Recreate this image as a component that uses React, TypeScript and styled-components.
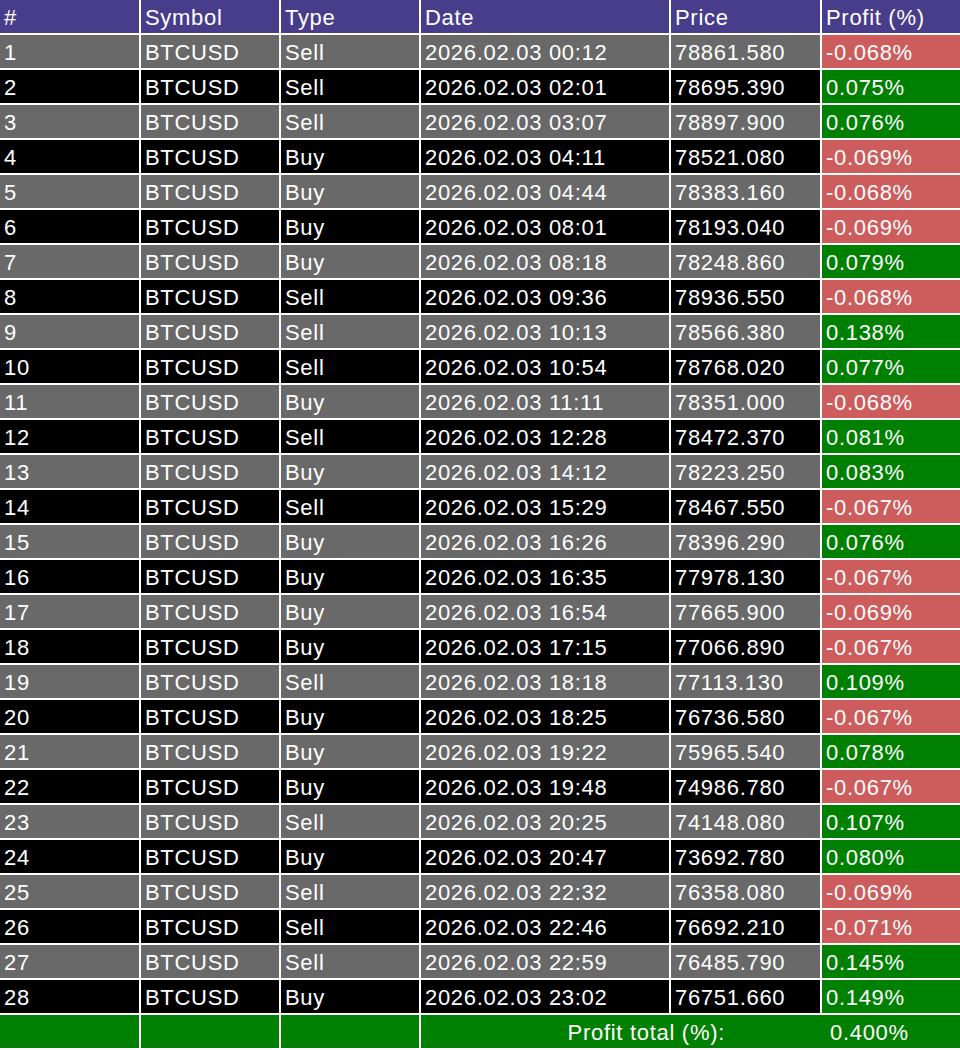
import React from "react";
import styled, { createGlobalStyle } from "styled-components";

const GlobalStyle = createGlobalStyle`
  html, body {
    margin: 0;
    padding: 0;
    background: #ffffff;
  }
  body {
    font-family: "Liberation Sans", Arial, sans-serif;
  }
`;

type Trade = {
  type: "Buy" | "Sell";
  time: string;
  price: string;
  profit: string;
};

const trades: Trade[] = [
  { type: "Sell", time: "00:12", price: "78861.580", profit: "-0.068" },
  { type: "Sell", time: "02:01", price: "78695.390", profit: "0.075" },
  { type: "Sell", time: "03:07", price: "78897.900", profit: "0.076" },
  { type: "Buy", time: "04:11", price: "78521.080", profit: "-0.069" },
  { type: "Buy", time: "04:44", price: "78383.160", profit: "-0.068" },
  { type: "Buy", time: "08:01", price: "78193.040", profit: "-0.069" },
  { type: "Buy", time: "08:18", price: "78248.860", profit: "0.079" },
  { type: "Sell", time: "09:36", price: "78936.550", profit: "-0.068" },
  { type: "Sell", time: "10:13", price: "78566.380", profit: "0.138" },
  { type: "Sell", time: "10:54", price: "78768.020", profit: "0.077" },
  { type: "Buy", time: "11:11", price: "78351.000", profit: "-0.068" },
  { type: "Sell", time: "12:28", price: "78472.370", profit: "0.081" },
  { type: "Buy", time: "14:12", price: "78223.250", profit: "0.083" },
  { type: "Sell", time: "15:29", price: "78467.550", profit: "-0.067" },
  { type: "Buy", time: "16:26", price: "78396.290", profit: "0.076" },
  { type: "Buy", time: "16:35", price: "77978.130", profit: "-0.067" },
  { type: "Buy", time: "16:54", price: "77665.900", profit: "-0.069" },
  { type: "Buy", time: "17:15", price: "77066.890", profit: "-0.067" },
  { type: "Sell", time: "18:18", price: "77113.130", profit: "0.109" },
  { type: "Buy", time: "18:25", price: "76736.580", profit: "-0.067" },
  { type: "Buy", time: "19:22", price: "75965.540", profit: "0.078" },
  { type: "Buy", time: "19:48", price: "74986.780", profit: "-0.067" },
  { type: "Sell", time: "20:25", price: "74148.080", profit: "0.107" },
  { type: "Buy", time: "20:47", price: "73692.780", profit: "0.080" },
  { type: "Sell", time: "22:32", price: "76358.080", profit: "-0.069" },
  { type: "Sell", time: "22:46", price: "76692.210", profit: "-0.071" },
  { type: "Sell", time: "22:59", price: "76485.790", profit: "0.145" },
  { type: "Buy", time: "23:02", price: "76751.660", profit: "0.149" },
];

const colors = {
  header: "#483d8b",
  odd: "#696969",
  even: "#000000",
  loss: "#cd5c5c",
  gain: "#008000",
};

type Tone = keyof typeof colors;

const Table = styled.div`
  display: grid;
  grid-template-columns: 139px 138px 138px 248px 149px 138px;
  grid-auto-rows: 33px;
  gap: 2px;
  width: 960px;
  background: #ffffff;
`;

const Cell = styled.div<{ $tone: Tone }>`
  display: flex;
  align-items: center;
  padding: 3px 4px 0;
  background: ${(p) => colors[p.$tone]};
  color: #ffffff;
  font-size: 22px;
  letter-spacing: 0.7px;
  line-height: 1;
  white-space: nowrap;
  overflow: hidden;
`;

const TotalCell = styled.div`
  grid-column: span 3;
  display: grid;
  grid-template-columns: 1fr 138px;
  align-items: center;
  padding-top: 3px;
  background: ${colors.gain};
  color: #ffffff;
  font-size: 22px;
  letter-spacing: 0.7px;
  line-height: 1;
  white-space: nowrap;
`;

const TotalLabel = styled.span`
  text-align: right;
  padding-right: 97px;
`;

const TotalValue = styled.span`
  padding-left: 8px;
`;

const headers = ["#", "Symbol", "Type", "Date", "Price", "Profit (%)"];

export default function App() {
  return (
    <>
      <GlobalStyle />
      <Table>
        {headers.map((h) => (
          <Cell key={h} $tone="header">
            {h}
          </Cell>
        ))}
        {trades.map((t, i) => {
          const tone: Tone = i % 2 === 0 ? "odd" : "even";
          return (
            <React.Fragment key={i}>
              <Cell $tone={tone}>{i + 1}</Cell>
              <Cell $tone={tone}>BTCUSD</Cell>
              <Cell $tone={tone}>{t.type}</Cell>
              <Cell $tone={tone}>2026.02.03 {t.time}</Cell>
              <Cell $tone={tone}>{t.price}</Cell>
              <Cell $tone={t.profit.startsWith("-") ? "loss" : "gain"}>
                {t.profit}%
              </Cell>
            </React.Fragment>
          );
        })}
        <Cell $tone="gain" />
        <Cell $tone="gain" />
        <Cell $tone="gain" />
        <TotalCell>
          <TotalLabel>Profit total (%):</TotalLabel>
          <TotalValue>0.400%</TotalValue>
        </TotalCell>
      </Table>
    </>
  );
}
